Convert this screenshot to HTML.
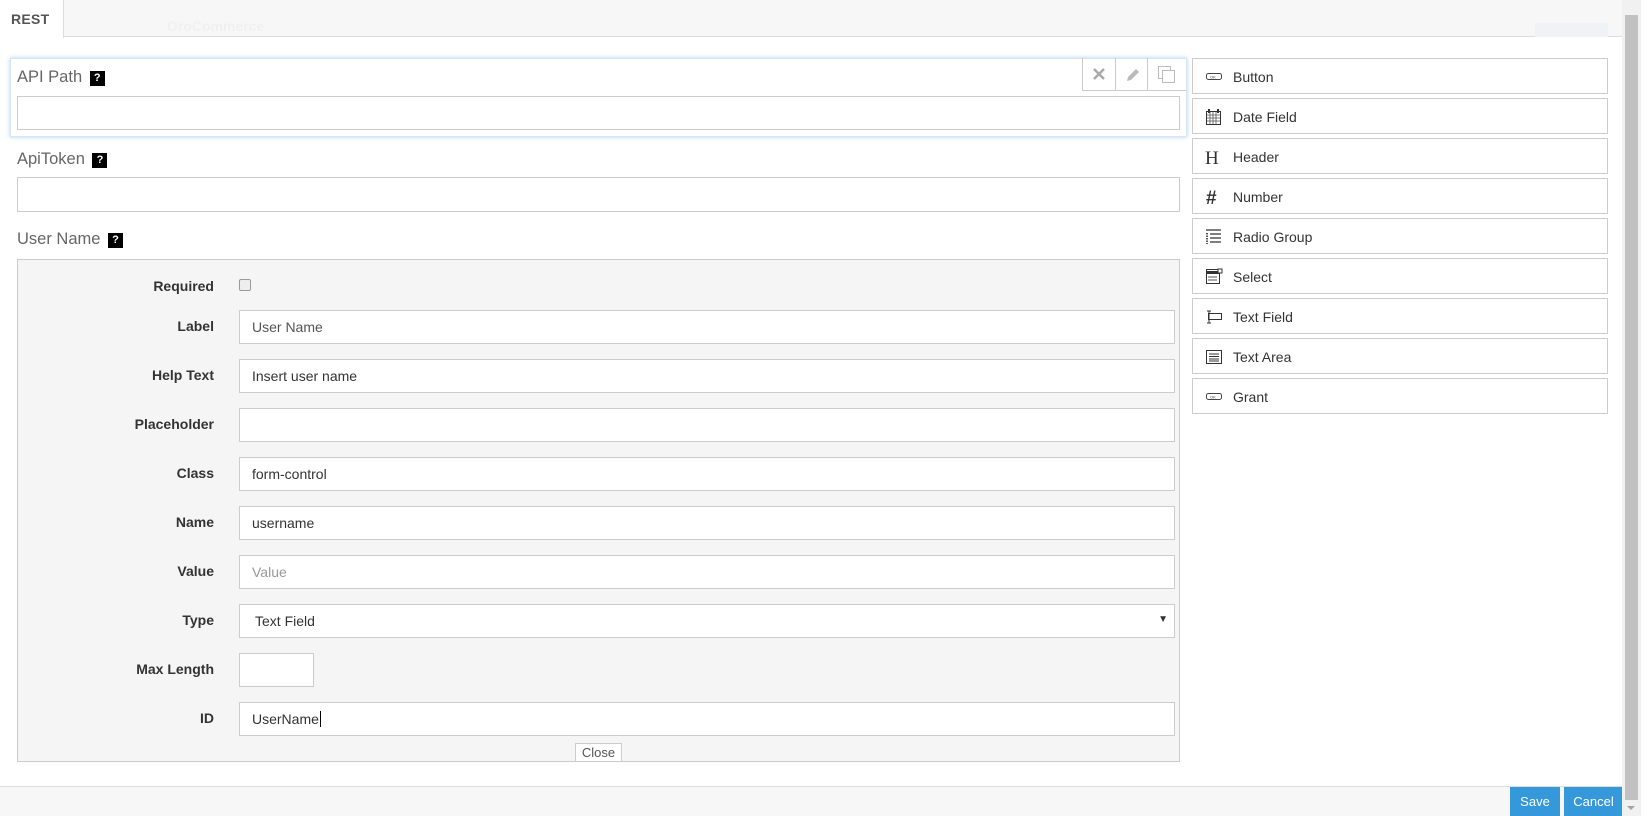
<!DOCTYPE html>
<html><head><meta charset="utf-8"><style>
*{box-sizing:border-box;margin:0;padding:0}
body{width:1647px;height:816px;overflow:hidden;background:#fff;font-family:"Liberation Sans",Arial,sans-serif;position:relative;color:#333}
.abs{position:absolute}
.topbar{left:0;top:0;width:1622px;height:37px;background:#f7f7f7;border-bottom:1px solid #ddd}
.tab{left:0;top:0;width:64px;height:38px;background:#fff;border-right:1px solid #ddd;font-weight:bold;font-size:14px;color:#555;padding:11px 0 0 11px;letter-spacing:.3px}
.lbl{font-size:16.5px;color:#666}
.q{display:inline-block;width:15px;height:15px;background:#000;color:#fff;font-size:11px;font-weight:bold;text-align:center;line-height:15px;vertical-align:1px;margin-left:3px}
.inp{border:1px solid #ccc;background:#fff}
.panel{left:17px;top:259px;width:1163px;height:503px;background:#f5f5f5;border:1px solid #ccc}
.rl{position:absolute;right:965px;width:200px;text-align:right;font-weight:bold;font-size:14px;color:#333}
.ri{position:absolute;left:221px;width:936px;height:34px;border:1px solid #ccc;background:#fff;font-size:14px;padding:8px 12px;color:#333}
.item{position:absolute;left:1192px;width:416px;height:36px;border:1px solid #ccc;background:#fff;font-size:14px;color:#333}
.item span{position:absolute;left:40px;top:10px}
.item svg{position:absolute;left:12px;top:9px}
.tb{position:absolute;top:58px;width:33px;height:33px;border-left:1px solid #ccc;border-bottom:1px solid #ccc}
.btn{top:787px;height:29px;background:#3498db;color:#fff;font-size:13px;text-align:center;line-height:29px}
</style></head><body>
<div class="abs topbar"><div style="position:absolute;left:167px;top:18px;font-size:14px;color:#f0f0f0;font-weight:bold">OroCommerce</div><div style="position:absolute;left:1535px;top:23px;width:73px;height:14px;background:#f0f2f5"></div></div>
<div class="abs tab">REST</div>

<div class="abs" style="left:10px;top:58px;width:1177px;height:79px;border:1px solid #d6e6f5;box-shadow:0 0 4px rgba(100,160,230,.5)"></div>
<div class="tb" style="left:1082px"><svg width="33" height="33" viewBox="0 0 33 33"><path d="M11 11l10 10M21 11L11 21" stroke="#aaa" stroke-width="2.5"/></svg></div>
<div class="tb" style="left:1115px"><svg width="33" height="33" viewBox="0 0 33 33"><path d="M11 23l1-4 8-8 3 3-8 8z" fill="#bbb"/></svg></div>
<div class="tb" style="left:1147px;width:39px"><svg width="39" height="33" viewBox="0 0 39 33"><rect x="10.5" y="8.5" width="12" height="12" fill="none" stroke="#bbb"/><rect x="14.5" y="12.5" width="12" height="12" fill="#fff" stroke="#bbb"/></svg></div>
<div class="abs lbl" style="left:17px;top:68px">API Path <span class="q">?</span></div>
<div class="abs inp" style="left:17px;top:96px;width:1163px;height:34px"></div>

<div class="abs lbl" style="left:17px;top:150px">ApiToken <span class="q">?</span></div>
<div class="abs inp" style="left:17px;top:177px;width:1163px;height:35px"></div>

<div class="abs lbl" style="left:17px;top:230px">User Name <span class="q">?</span></div>
<div class="abs panel">
<div class="rl" style="top:18px">Required</div>
<div style="position:absolute;left:221px;top:19px;width:12px;height:12px;border:1px solid #999;border-radius:2px;background:#eee"></div>
<div class="rl" style="top:58px">Label</div><div class="ri" style="top:50px;color:#555">User Name</div>
<div class="rl" style="top:107px">Help Text</div><div class="ri" style="top:99px">Insert user name</div>
<div class="rl" style="top:156px">Placeholder</div><div class="ri" style="top:148px"></div>
<div class="rl" style="top:205px">Class</div><div class="ri" style="top:197px">form-control</div>
<div class="rl" style="top:254px">Name</div><div class="ri" style="top:246px">username</div>
<div class="rl" style="top:303px">Value</div><div class="ri" style="top:295px;color:#999">Value</div>
<div class="rl" style="top:352px">Type</div><div class="ri" style="top:344px;padding-left:15px">Text Field<span style="position:absolute;right:6px;top:9px;font-size:10px">▼</span></div>
<div class="rl" style="top:401px">Max Length</div><div class="ri" style="top:393px;width:75px"></div>
<div class="rl" style="top:450px">ID</div><div class="ri" style="top:442px">UserName<span style="border-left:1px solid #000;margin-left:1px"></span></div>
<div style="position:absolute;left:557px;top:483px;width:47px;height:19px;background:#fff;border:1px solid #ccc;font-size:13px;color:#555;text-align:center;line-height:17px">Close</div>
</div>

<div class="item" style="top:58px"><svg width="18" height="18"><rect x="1.5" y="5.5" width="15" height="6" rx="2" fill="none" stroke="#444"/><text x="5" y="10.5" font-size="4" fill="#444">OK</text></svg><span>Button</span></div>
<div class="item" style="top:98px"><svg width="18" height="18"><rect x="1.5" y="3.5" width="14" height="13" fill="none" stroke="#333"/><path d="M2 7h13M2 10h13M2 13h13M5 4v12M8 4v12M11 4v12" stroke="#555" stroke-width=".8"/><path d="M4 1v4M13 1v4" stroke="#333" stroke-width="2"/></svg><span>Date Field</span></div>
<div class="item" style="top:138px"><svg width="18" height="18"><text x="0" y="16" font-family="Liberation Serif" font-size="19" fill="#333">H</text></svg><span>Header</span></div>
<div class="item" style="top:178px"><svg width="18" height="18"><text x="1" y="16" font-family="Liberation Sans" font-weight="bold" font-size="19" fill="#333">#</text></svg><span>Number</span></div>
<div class="item" style="top:218px"><svg width="18" height="18"><path d="M1 2h15M5 6h11M5 10h11M5 14h11" stroke="#333" stroke-width="1.2"/><path d="M2 5v11" stroke="#555" stroke-width="2" stroke-dasharray="1.5 1"/></svg><span>Radio Group</span></div>
<div class="item" style="top:258px"><svg width="18" height="18"><rect x="1.5" y="1.5" width="13" height="14" fill="none" stroke="#333"/><rect x="1.5" y="3" width="13" height="3" fill="#333"/><path d="M3 9h9M3 12h9" stroke="#555"/><rect x="13" y="1" width="4" height="4" fill="#fff" stroke="#333"/></svg><span>Select</span></div>
<div class="item" style="top:298px"><svg width="18" height="18"><rect x="3.5" y="5.5" width="13" height="6" fill="none" stroke="#333"/><path d="M4 3v12M2 3h4M2 15h4" stroke="#333"/></svg><span>Text Field</span></div>
<div class="item" style="top:338px"><svg width="18" height="18"><rect x="1.5" y="2.5" width="15" height="13" fill="none" stroke="#333"/><path d="M4 6h10M4 8.5h10M4 11h10M4 13h10" stroke="#333"/></svg><span>Text Area</span></div>
<div class="item" style="top:378px"><svg width="18" height="18"><rect x="1.5" y="5.5" width="15" height="6" rx="2" fill="none" stroke="#444"/><text x="5" y="10.5" font-size="4" fill="#444">OK</text></svg><span>Grant</span></div>

<div class="abs" style="left:0;top:786px;width:1622px;height:30px;background:#f7f7f7;border-top:1px solid #ddd"></div>
<div class="abs btn" style="left:1510px;width:50px">Save</div>
<div class="abs btn" style="left:1564px;width:59px">Cancel</div>

<div class="abs" style="left:1622px;top:0;width:19px;height:816px;background:#f1f1f1"></div>
<div class="abs" style="left:1625px;top:15px;width:13px;height:785px;background:#c1c1c1"></div>
<div class="abs" style="left:1627px;top:806px;width:0;height:0;border-left:4px solid transparent;border-right:4px solid transparent;border-top:4px solid #a3a3a3"></div>
</body></html>
